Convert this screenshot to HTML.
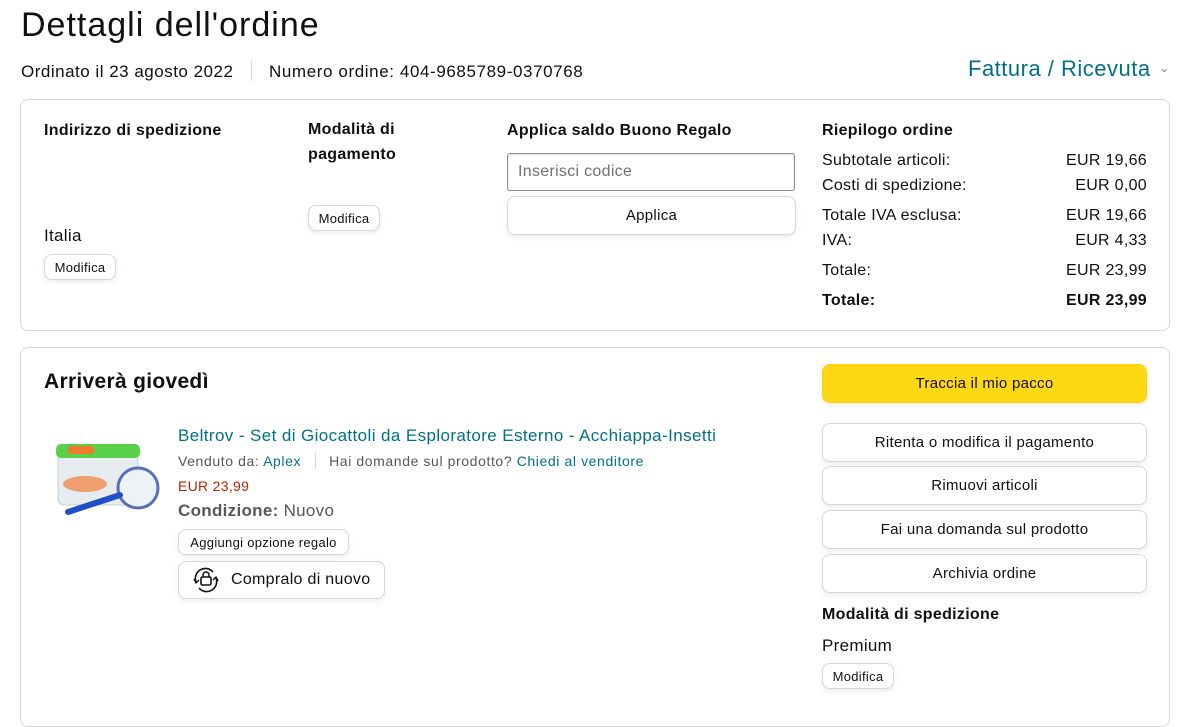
<!DOCTYPE html>
<html><head><meta charset="utf-8"><style>
*{box-sizing:border-box;margin:0;padding:0}
body{width:1182px;height:702px;overflow:hidden;background:#fff;font-family:"Liberation Sans",Arial,sans-serif;color:#0f1111;position:relative;letter-spacing:0.3px}
.a{position:absolute;white-space:nowrap}
.box{position:absolute;border:1px solid #d5d9d9;border-radius:8px}
.b{font-weight:bold}
.btn{position:absolute;border:1px solid #d5d9d9;border-radius:8px;background:#fff;box-shadow:0 2px 5px rgba(213,217,217,.5);display:flex;align-items:center;justify-content:center;font-size:15px}
.pill{position:absolute;border:1px solid #d5d9d9;border-radius:8px;background:#fff;box-shadow:0 2px 5px rgba(213,217,217,.5);font-size:13px;display:flex;align-items:center;justify-content:center}
.r{position:absolute;left:822px;width:325px;font-size:16px;display:flex;justify-content:space-between}
.t{color:#007185}
</style></head><body>
<div class="a" style="left:21px;top:6px;font-size:34px;letter-spacing:1px">Dettagli dell'ordine</div>
<div class="a" style="left:21px;top:62px;font-size:17px;letter-spacing:0.5px">Ordinato il 23 agosto 2022</div>
<div class="a" style="left:251px;top:61px;width:1px;height:20px;background:#d5d9d9"></div>
<div class="a" style="left:269px;top:62px;font-size:17px;letter-spacing:0.6px">Numero ordine: 404-9685789-0370768</div>
<div class="a t" style="left:968px;top:56px;font-size:22px;letter-spacing:0.5px">Fattura / Ricevuta</div>
<div class="a" style="left:1159px;top:60px;font-size:13px;color:#888">&#8964;</div>

<div class="box" style="left:20px;top:99px;width:1150px;height:232px"></div>
<div class="a b" style="left:44px;top:122px;font-size:16px">Indirizzo di spedizione</div>
<div class="a" style="left:44px;top:226px;font-size:17px">Italia</div>
<div class="pill" style="left:44px;top:254px;width:72px;height:26px">Modifica</div>
<div class="a b" style="left:308px;top:117px;font-size:16px;line-height:25px">Modalità di<br>pagamento</div>
<div class="pill" style="left:308px;top:205px;width:72px;height:26px">Modifica</div>
<div class="a b" style="left:507px;top:122px;font-size:16px">Applica saldo Buono Regalo</div>
<div class="a" style="left:507px;top:153px;width:288px;height:38px;border:1px solid #888c8c;border-radius:3px;box-shadow:inset 0 1px 2px rgba(15,17,17,.15);padding:9px 10px;font-size:16px;color:#6f7373">Inserisci codice</div>
<div class="btn" style="left:507px;top:196px;width:289px;height:39px">Applica</div>
<div class="a b" style="left:822px;top:122px;font-size:16px">Riepilogo ordine</div>
<div class="r" style="top:152px"><span>Subtotale articoli:</span><span>EUR 19,66</span></div>
<div class="r" style="top:177px"><span>Costi di spedizione:</span><span>EUR 0,00</span></div>
<div class="r" style="top:207px"><span>Totale IVA esclusa:</span><span>EUR 19,66</span></div>
<div class="r" style="top:232px"><span>IVA:</span><span>EUR 4,33</span></div>
<div class="r" style="top:262px"><span>Totale:</span><span>EUR 23,99</span></div>
<div class="r b" style="top:292px"><span>Totale:</span><span>EUR 23,99</span></div>

<div class="box" style="left:20px;top:347px;width:1150px;height:380px"></div>
<div class="a b" style="left:44px;top:370px;font-size:21px">Arriverà giovedì</div>
<svg class="a" style="left:50px;top:440px" width="112" height="80" viewBox="0 0 112 80">
<rect x="8" y="10" width="80" height="55" rx="6" fill="#e6ecef" stroke="#c8d0d0"/>
<rect x="6" y="4" width="84" height="14" rx="5" fill="#5ad04a"/>
<rect x="18" y="6" width="26" height="8" rx="3" fill="#f07a2a"/>
<ellipse cx="35" cy="44" rx="22" ry="8" fill="#f0a070"/>
<circle cx="88" cy="48" r="20" fill="#eef2f6" stroke="#5a6fb8" stroke-width="3"/>
<line x1="18" y1="72" x2="70" y2="55" stroke="#2050c8" stroke-width="6" stroke-linecap="round"/>
</svg>
<div class="a t" style="left:178px;top:426px;font-size:17px;letter-spacing:0.4px">Beltrov - Set di Giocattoli da Esploratore Esterno - Acchiappa-Insetti</div>
<div class="a" style="left:178px;top:453px;font-size:14px;color:#565959;letter-spacing:0.6px">Venduto da: <span class="t">Aplex</span><span style="display:inline-block;width:1px;height:16px;background:#d5d9d9;margin:0 13px 0 14px;vertical-align:-3px"></span>Hai domande sul prodotto? <span class="t">Chiedi al venditore</span></div>
<div class="a" style="left:178px;top:478px;font-size:14px;color:#b12704">EUR 23,99</div>
<div class="a" style="left:178px;top:501px;font-size:17px;color:#565959"><b>Condizione:</b> Nuovo</div>
<div class="pill" style="left:178px;top:529px;width:171px;height:26px">Aggiungi opzione regalo</div>
<div class="btn" style="left:178px;top:561px;width:207px;height:38px;justify-content:flex-start;padding-left:12px;font-size:16px">
<svg width="30" height="30" viewBox="0 0 30 30" style="margin-right:10px"><path d="M5 17A10 10 0 0 1 22 7M25 13A10 10 0 0 1 8 23" fill="none" stroke="#0f1111" stroke-width="1.6"/><path d="M3 14l2 4 3-3M27 16l-2-4-3 3" fill="none" stroke="#0f1111" stroke-width="1.4"/><rect x="10" y="12" width="10" height="8" rx="1.5" fill="none" stroke="#0f1111" stroke-width="1.6"/><path d="M12 12v-2a3 3 0 0 1 6 0v2" fill="none" stroke="#0f1111" stroke-width="1.5"/></svg>Compralo di nuovo</div>

<div class="btn" style="left:822px;top:364px;width:325px;height:39px;background:#ffd814;border-color:#fcd200">Traccia il mio pacco</div>
<div class="btn" style="left:822px;top:423px;width:325px;height:39px">Ritenta o modifica il pagamento</div>
<div class="btn" style="left:822px;top:466px;width:325px;height:39px">Rimuovi articoli</div>
<div class="btn" style="left:822px;top:510px;width:325px;height:39px">Fai una domanda sul prodotto</div>
<div class="btn" style="left:822px;top:554px;width:325px;height:39px">Archivia ordine</div>
<div class="a b" style="left:822px;top:606px;font-size:16px">Modalità di spedizione</div>
<div class="a" style="left:822px;top:636px;font-size:17px">Premium</div>
<div class="pill" style="left:822px;top:663px;width:72px;height:26px">Modifica</div>
</body></html>
